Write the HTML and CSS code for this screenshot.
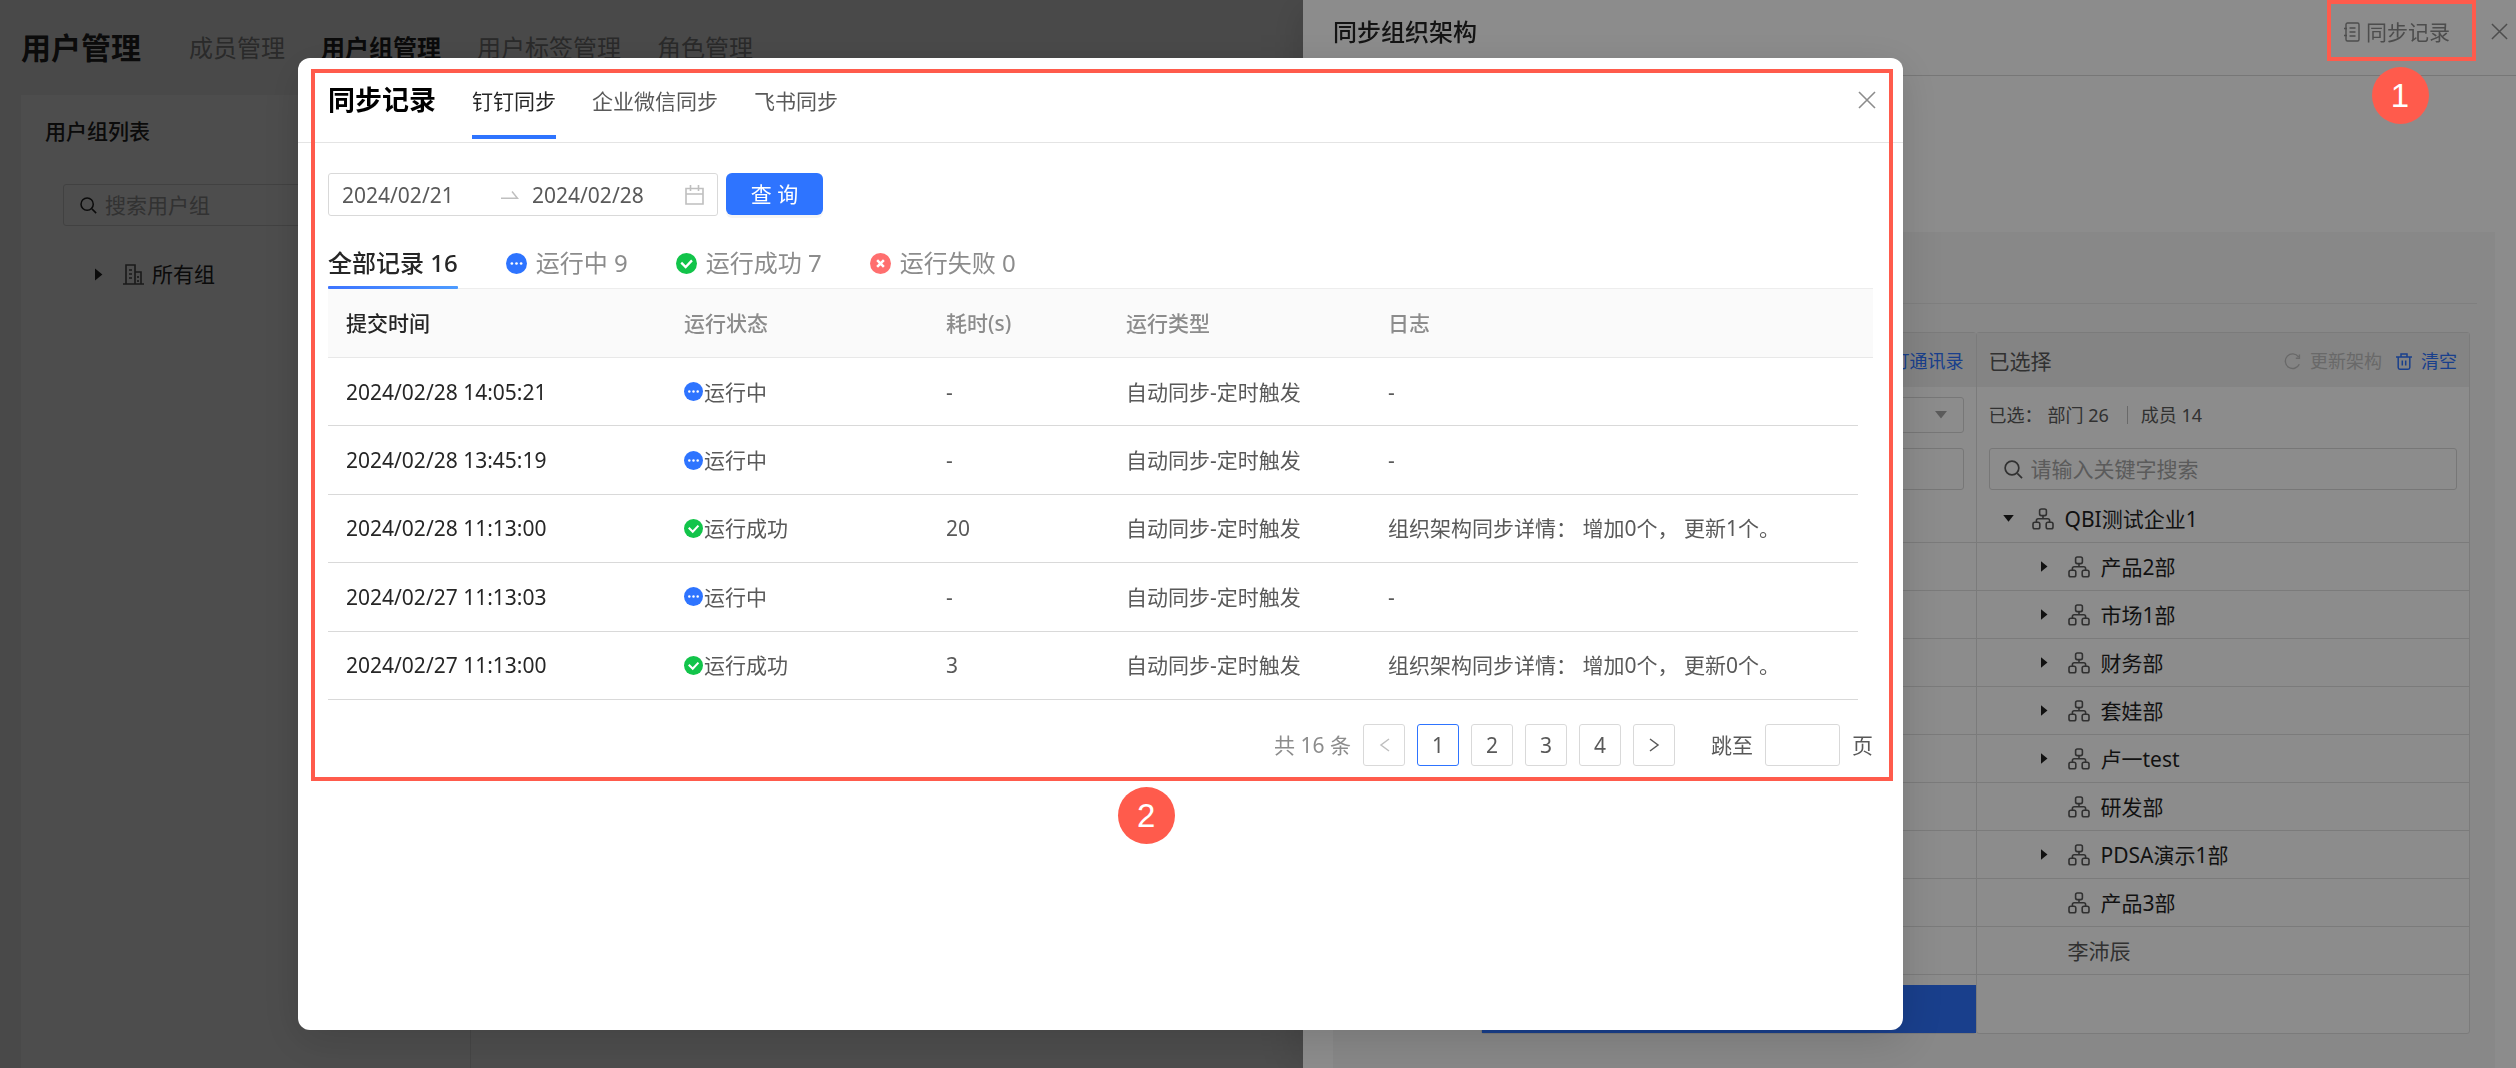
FILE: index.html
```html
<!DOCTYPE html>
<html lang="zh-CN">
<head>
    <meta charset="UTF-8">
    <meta name="viewport" content="width=device-width, initial-scale=1.0">
    <title>用户管理</title>
    <link rel="stylesheet" href="styles.css">
</head>
<body>
    <!-- shared icons -->
    <svg class="sprite" aria-hidden="true">
        <symbol id="i-org" viewBox="0 0 22 22">
            <g fill="none" stroke="currentColor" stroke-width="1.6">
                <rect x="7.6" y="1" width="6.8" height="6.6" rx="1.8"/>
                <rect x="1" y="14.2" width="6.8" height="6.6" rx="1.8"/>
                <rect x="14.2" y="14.2" width="6.8" height="6.6" rx="1.8"/>
                <path d="M11 7.6v3.2M4.4 14.2v-1.6q0-1.8 1.8-1.8h9.6q1.8 0 1.8 1.8v1.6"/>
            </g>
        </symbol>
        <symbol id="i-right" viewBox="0 0 8 12"><path d="M0 0l7.4 6L0 12z" fill="currentColor"/></symbol>
        <symbol id="i-down" viewBox="0 0 12 8"><path d="M0 0h12L6 7.6z" fill="currentColor"/></symbol>
        <symbol id="i-close" viewBox="0 0 18 18"><path d="M1 1l16 16M17 1L1 17" fill="none" stroke="currentColor" stroke-width="1.6"/></symbol>
        <symbol id="i-search" viewBox="0 0 20 20"><path d="M14 14l5 5" fill="none" stroke="currentColor" stroke-width="1.8"/><circle cx="8.4" cy="8.4" r="7.2" fill="none" stroke="currentColor" stroke-width="1.8"/></symbol>
        <symbol id="i-running" viewBox="0 0 20 20"><circle cx="10" cy="10" r="10" fill="#2e74ff"/><circle cx="5.6" cy="10" r="1.3" fill="#fff"/><circle cx="10" cy="10" r="1.3" fill="#fff"/><circle cx="14.4" cy="10" r="1.3" fill="#fff"/></symbol>
        <symbol id="i-success" viewBox="0 0 20 20"><circle cx="10" cy="10" r="10" fill="#12c44a"/><path d="M5 9.2l4.2 4.2 6-6.4" fill="none" stroke="#fff" stroke-width="2.2"/></symbol>
        <symbol id="i-fail" viewBox="0 0 20 20"><circle cx="10" cy="10" r="10" fill="#ff6f6f"/><path d="M6.8 6.8l6.4 6.4M13.2 6.8l-6.4 6.4" fill="none" stroke="#fff" stroke-width="2.4"/></symbol>
    </svg>

    <main class="page">
        <header class="page-header">
            <h1>用户管理</h1>
            <nav class="page-nav">
                <a href="#">成员管理</a>
                <a href="#" class="active">用户组管理</a>
                <a href="#">用户标签管理</a>
                <a href="#">角色管理</a>
            </nav>
        </header>
        <div class="page-panel">
            <aside class="group-list">
                <h2>用户组列表</h2>
                <div class="search-box group-search">
                    <svg width="17" height="17"><use href="#i-search"/></svg>
                    <input type="text" placeholder="搜索用户组" aria-label="搜索用户组">
                </div>
                <div class="group-root">
                    <svg class="caret" width="8" height="13"><use href="#i-right"/></svg>
                    <svg width="21" height="21" viewBox="0 0 21 21" fill="none" stroke="#555" stroke-width="1.6">
                        <path d="M0 20h21M3 20V1h9v19M12 8h6v12M6 6h3M6 10h3M6 14h3M15 12v2M15 16v2"/>
                    </svg>
                    <span>所有组</span>
                </div>
            </aside>
        </div>
    </main>

    <div class="mask"></div>

    <aside class="drawer">
        <header class="drawer-header">
            <h2>同步组织架构</h2>
            <button class="link-btn" type="button">
                <svg width="17" height="20" viewBox="0 0 17 20" fill="none" stroke="currentColor" stroke-width="1.4">
                    <rect x="3" y="1" width="13" height="18" rx="1.5"/>
                    <path d="M6.500 6h6M6.500 10h6M6.500 14h6M1 6.500h3M1 13.500h3"/>
                </svg>
                同步记录
            </button>
            <button class="icon-btn" type="button" aria-label="关闭"><svg width="17" height="17"><use href="#i-close"/></svg></button>
        </header>
        <div class="drawer-body">
            <div class="block-title"></div>
            <div class="transfer">
                <section class="col">
                    <div class="col-header end"><a href="#">钉钉通讯录</a></div>
                    <div class="col-select">
                        <button class="fake-select" type="button" aria-label="选择范围"><svg width="12" height="8"><use href="#i-down"/></svg></button>
                    </div>
                    <div class="search-box"><input type="text" aria-label="搜索"></div>
                    <ul class="tree">
                        <li></li><li></li><li></li><li></li><li></li>
                        <li></li><li></li><li></li><li></li><li></li>
                    </ul>
                    <button class="add-btn" type="button" aria-label="添加"></button>
                </section>
                <section class="col">
                    <div class="col-header">
                        <h3>已选择</h3>
                        <button class="col-action disabled" type="button">
                            <svg width="17" height="17" viewBox="0 0 17 17" fill="none" stroke="currentColor" stroke-width="1.4"><path d="M14.500 3.800A7.300 7.300 0 1 0 15.300 11.200M15.400 1.600v3.600h-3.600"/></svg>
                            更新架构
                        </button>
                        <button class="col-action" type="button">
                            <svg width="16" height="17" viewBox="0 0 16 17" fill="none" stroke="currentColor" stroke-width="1.5"><path d="M0 4h16M5 4V1h6v3M2.200 4v10.500q0 1.700 1.700 1.700h8.200q1.700 0 1.700-1.700V4M6.300 7.500v5M9.700 7.500v5"/></svg>
                            清空
                        </button>
                    </div>
                    <div class="col-count">
                        <span>已选：</span>
                        <span>部门 26</span>
                        <i></i>
                        <span>成员 14</span>
                    </div>
                    <div class="search-box">
                        <svg width="19" height="19"><use href="#i-search"/></svg>
                        <input type="text" placeholder="请输入关键字搜索" aria-label="请输入关键字搜索">
                    </div>
                    <ul class="tree">
                        <li class="root"><span class="arrow"><svg width="11" height="7"><use href="#i-down"/></svg></span><svg class="org"><use href="#i-org"/></svg>QBI测试企业1</li>
                        <li><span class="arrow"><svg width="7" height="11"><use href="#i-right"/></svg></span><svg class="org"><use href="#i-org"/></svg>产品2部</li>
                        <li><span class="arrow"><svg width="7" height="11"><use href="#i-right"/></svg></span><svg class="org"><use href="#i-org"/></svg>市场1部</li>
                        <li><span class="arrow"><svg width="7" height="11"><use href="#i-right"/></svg></span><svg class="org"><use href="#i-org"/></svg>财务部</li>
                        <li><span class="arrow"><svg width="7" height="11"><use href="#i-right"/></svg></span><svg class="org"><use href="#i-org"/></svg>套娃部</li>
                        <li><span class="arrow"><svg width="7" height="11"><use href="#i-right"/></svg></span><svg class="org"><use href="#i-org"/></svg>卢一test</li>
                        <li><span class="arrow"></span><svg class="org"><use href="#i-org"/></svg>研发部</li>
                        <li><span class="arrow"><svg width="7" height="11"><use href="#i-right"/></svg></span><svg class="org"><use href="#i-org"/></svg>PDSA演示1部</li>
                        <li><span class="arrow"></span><svg class="org"><use href="#i-org"/></svg>产品3部</li>
                        <li class="member"><span class="arrow"></span>李沛辰</li>
                    </ul>
                </section>
            </div>
        </div>
    </aside>

    <div class="modal-wrap">
        <div class="modal" role="dialog" aria-label="同步记录">
            <div class="records">
                <header class="modal-header">
                    <h2>同步记录</h2>
                    <nav class="modal-tabs">
                        <a href="#" class="active">钉钉同步</a>
                        <a href="#">企业微信同步</a>
                        <a href="#">飞书同步</a>
                    </nav>
                    <button class="icon-btn" type="button" aria-label="关闭"><svg width="18" height="18"><use href="#i-close"/></svg></button>
                </header>
                <div class="modal-body">
                    <form class="filter">
                        <div class="range">
                            <input type="text" value="2024/02/21" aria-label="开始日期">
                            <svg width="18" height="10" viewBox="0 0 18 10" fill="none" stroke="#bfbfbf" stroke-width="1.5"><path d="M0 8.300h16.500L11 1.500"/></svg>
                            <input class="range-end" type="text" value="2024/02/28" aria-label="结束日期">
                            <svg width="19" height="20" viewBox="0 0 19 20" fill="none" stroke="#bfbfbf" stroke-width="1.600"><path d="M1 3.500h17V19H1zM1 9h17M5.500 0v6M13.500 0v6"/></svg>
                        </div>
                        <button class="query-btn" type="button">查 询</button>
                    </form>
                    <div class="status-tabs">
                        <button class="active" type="button">全部记录 16</button>
                        <button type="button"><svg width="21" height="21"><use href="#i-running"/></svg>运行中 9</button>
                        <button type="button"><svg width="21" height="21"><use href="#i-success"/></svg>运行成功 7</button>
                        <button type="button"><svg width="21" height="21"><use href="#i-fail"/></svg>运行失败 0</button>
                    </div>
                    <table class="log-table">
                        <colgroup>
                            <col class="c-time"><col class="c-status"><col class="c-cost"><col class="c-type"><col><col class="c-bar">
                        </colgroup>
                        <thead>
                            <tr><th class="sorted">提交时间</th><th>运行状态</th><th>耗时(s)</th><th>运行类型</th><th>日志</th><th class="bar"></th></tr>
                        </thead>
                        <tbody>
                            <tr><td>2024/02/28 14:05:21</td><td><span class="state"><svg width="19" height="19"><use href="#i-running"/></svg>运行中</span></td><td>-</td><td>自动同步-定时触发</td><td>-</td></tr>
                            <tr><td>2024/02/28 13:45:19</td><td><span class="state"><svg width="19" height="19"><use href="#i-running"/></svg>运行中</span></td><td>-</td><td>自动同步-定时触发</td><td>-</td></tr>
                            <tr><td>2024/02/28 11:13:00</td><td><span class="state"><svg width="19" height="19"><use href="#i-success"/></svg>运行成功</span></td><td>20</td><td>自动同步-定时触发</td><td>组织架构同步详情： 增加0个， 更新1个。</td></tr>
                            <tr><td>2024/02/27 11:13:03</td><td><span class="state"><svg width="19" height="19"><use href="#i-running"/></svg>运行中</span></td><td>-</td><td>自动同步-定时触发</td><td>-</td></tr>
                            <tr><td>2024/02/27 11:13:00</td><td><span class="state"><svg width="19" height="19"><use href="#i-success"/></svg>运行成功</span></td><td>3</td><td>自动同步-定时触发</td><td>组织架构同步详情： 增加0个， 更新0个。</td></tr>
                        </tbody>
                    </table>
                    <div class="pagination">
                        <span class="total">共 16 条</span>
                        <button class="prev" type="button" aria-label="上一页"><svg width="11" height="14" viewBox="0 0 11 14"><path d="M10 1L2 7l8 6" fill="none" stroke="currentColor" stroke-width="1.5"/></svg></button>
                        <button class="current" type="button">1</button>
                        <button type="button">2</button>
                        <button type="button">3</button>
                        <button type="button">4</button>
                        <button type="button" aria-label="下一页"><svg width="11" height="14" viewBox="0 0 11 14"><path d="M1 1l8 6-8 6" fill="none" stroke="currentColor" stroke-width="1.5"/></svg></button>
                        <label class="jump">跳至<input type="text">页</label>
                    </div>
                </div>
                <div class="mark mark-records"><span class="badge">2</span></div>
            </div>
        </div>
    </div>

    <div class="mark mark-entry"><span class="badge">1</span></div>
</body>
</html>
```
FILE: styles.css
```css
* {
    box-sizing: border-box;
}
body {
    margin: 0;
    font-family: "Noto Sans", "Noto Sans CJK SC", sans-serif;
    font-size: 21px;
    line-height: 30px;
    color: #262626;
    background: #f5f5f5;
}
h1, h2, h3, ul {
    margin: 0;
    padding: 0;
}
ul {
    list-style: none;
}
a {
    color: inherit;
    text-decoration: none;
}
button, input {
    font: inherit;
    color: inherit;
    margin: 0;
    padding: 0;
    border: none;
    background: none;
}
button {
    cursor: pointer;
}
input {
    min-width: 0;
    outline: none;
}
input::placeholder {
    color: #a6a6a6;
}
svg {
    display: block;
    flex: none;
}
.sprite {
    position: absolute;
    width: 0;
    height: 0;
}

/* page behind */
.page {
    display: flex;
    flex-direction: column;
    min-height: 100vh;
    padding-left: 21px;
}
.page-header {
    display: flex;
    align-items: center;
    gap: 48px;
    height: 95px;
}
.page-header h1 {
    font-size: 30px;
    font-weight: 700;
}
.page-nav {
    display: flex;
    gap: 36px;
    font-size: 24px;
    color: #8c8c8c;
}
.page-nav .active {
    color: #262626;
    font-weight: 700;
}
.page-panel {
    flex: 1;
    display: flex;
    background: #fff;
}
.group-list {
    width: 450px;
    padding: 21px 24px;
    border-right: 1px solid #e8e8e8;
}
.group-list h2 {
    font-size: 21px;
    font-weight: 500;
}
.search-box {
    display: flex;
    align-items: center;
    gap: 8px;
    height: 42px;
    padding: 0 14px;
    border: 1px solid #d9d9d9;
    border-radius: 3px;
}
.search-box input {
    flex: 1;
}
.group-search {
    margin: 38px 0 0 18px;
    padding: 0 16px;
}
.group-root {
    display: flex;
    align-items: center;
    gap: 8px;
    margin: 33px 0 0 50px;
}
.group-root .caret {
    margin-right: 12px;
}

.mask {
    position: fixed;
    inset: 0;
    background: rgba(0, 0, 0, 0.45);
}

/* drawer */
.drawer {
    position: fixed;
    top: 0;
    right: 0;
    bottom: 0;
    width: 1213px;
    max-width: 100%;
    display: flex;
    flex-direction: column;
    overflow: hidden;
    background: #fff;
    box-shadow: -9px 0 42px rgba(0, 0, 0, 0.12);
}
.drawer-header {
    display: flex;
    align-items: center;
    height: 76px;
    padding: 0 8px 12px 30px;
    border-bottom: 1px solid #d9d9d9;
}
.drawer-header h2 {
    flex: 1;
    font-size: 24px;
    font-weight: 500;
}
.link-btn {
    display: flex;
    align-items: center;
    gap: 6px;
    margin-right: 41px;
    color: #8c8c8c;
}
.icon-btn {
    color: #8c8c8c;
}
.drawer-body {
    flex: 1;
    margin: 156px 21px 0 30px;
    padding: 0 25px 0 148px;
    background: #f7f7f7;
}
.block-title {
    height: 72px;
    margin: 0 -7px 28px -130px;
    border-bottom: 1px solid #e8e8e8;
}
.transfer {
    display: grid;
    grid-template-columns: 1fr 1fr;
}
.col {
    display: flex;
    flex-direction: column;
    height: 702px;
    border: 1px solid #e0e0e0;
    border-radius: 3px;
    background: #fff;
}
.col:first-child {
    border-right: none;
}
.col-header {
    display: flex;
    align-items: center;
    height: 54px;
    padding: 2px 12px 0;
    background: #f0f0f0;
}
.col-header h3 {
    flex: 1;
    font-size: 21px;
    font-weight: 400;
    color: #595959;
}
.col-header.end {
    justify-content: flex-end;
    font-size: 18px;
    color: #2e74ff;
}
.col-action {
    display: flex;
    align-items: center;
    gap: 9px;
    margin-left: 14px;
    font-size: 18px;
    color: #2e74ff;
}
.col-action.disabled {
    color: #bfbfbf;
}
.col-count, .col-select {
    display: flex;
    align-items: center;
    height: 61px;
    padding: 0 12px 5px;
    font-size: 18px;
    color: #595959;
}
.col-count i {
    width: 1px;
    height: 18px;
    margin: 0 13px 0 18px;
    background: #bfbfbf;
}
.col-count span:first-child {
    margin-right: 5px;
}
.fake-select {
    display: flex;
    align-items: center;
    justify-content: flex-end;
    width: 100%;
    height: 36px;
    padding-right: 16px;
    border: 1px solid #d9d9d9;
    border-radius: 3px;
    color: #a6a6a6;
}
.col .search-box {
    margin: 0 12px 5px;
    color: #595959;
}
.tree li {
    display: flex;
    align-items: center;
    height: 48px;
    padding-left: 51px;
    border-bottom: 1px solid #e0e0e0;
    color: #1f1f1f;
}
.tree .root {
    padding-left: 15px;
}
.tree .arrow {
    display: flex;
    justify-content: center;
    width: 40px;
    padding-right: 7px;
}
.tree .org {
    width: 22px;
    height: 22px;
    margin-right: 11px;
    color: #595959;
}
.tree .member {
    color: #595959;
}
.add-btn {
    flex: 1;
    margin-top: 10px;
    background: #2e74ff;
}

/* modal */
.modal-wrap {
    position: fixed;
    inset: 0;
    display: flex;
    padding: 58px 613px 38px 298px;
    background: rgba(0, 0, 0, 0.45);
}
.modal {
    flex: 1;
    min-width: 0;
    background: #fff;
    border-radius: 12px;
    box-shadow: 0 9px 42px rgba(0, 0, 0, 0.14);
}
.records {
    position: relative;
    padding-bottom: 15px;
}
.modal-header {
    display: flex;
    align-items: center;
    height: 85px;
    padding: 0 27px 0 30px;
    border-bottom: 1px solid #e4e4e4;
}
.modal-header h2 {
    margin-right: 36px;
    font-size: 27px;
    font-weight: 700;
    color: #000;
}
.modal-tabs {
    flex: 1;
    align-self: flex-start;
    display: flex;
    gap: 36px;
    padding-top: 9px;
    color: #595959;
    line-height: 68px;
}
.modal-tabs a {
    border-bottom: 4px solid transparent;
}
.modal-tabs .active {
    color: #262626;
    border-color: #2e74ff;
}
.modal-body {
    padding: 30px 30px 0;
}
.filter {
    display: flex;
    gap: 8px;
}
.range {
    display: flex;
    align-items: center;
    gap: 13px;
    width: 390px;
    height: 43px;
    padding: 0 13px;
    border: 1px solid #d9d9d9;
    border-radius: 3px;
    color: #595959;
}
.range input {
    flex: none;
    width: 146px;
}
.range .range-end {
    flex: 1;
}
.query-btn {
    width: 97px;
    height: 42px;
    border-radius: 6px;
    color: #fff;
    background: #2e74ff;
    box-shadow: 0 3px 0 rgba(0, 0, 0, 0.04);
}
.status-tabs {
    display: flex;
    gap: 48px;
    margin: 21px 0 -1px;
}
.status-tabs button {
    position: relative;
    display: flex;
    align-items: center;
    gap: 9px;
    height: 52px;
    font-size: 24px;
    color: #8c8c8c;
}
.status-tabs .active {
    color: #262626;
    font-weight: 500;
}
.status-tabs .active::after {
    content: "";
    position: absolute;
    left: 0;
    right: 0;
    bottom: 0;
    height: 3px;
    border-radius: 1px;
    background: linear-gradient(90deg, #3d74ff, #4d9bff);
}
.log-table {
    width: 100%;
    height: 412px;
    table-layout: fixed;
    border-spacing: 0;
    color: #595959;
}
.c-time {
    width: 338px;
}
.c-status, .c-type {
    width: 262px;
}
.c-cost {
    width: 180px;
}
.c-bar {
    width: 15px;
}
.log-table th {
    height: 70px;
    padding: 0 0 0 18px;
    text-align: left;
    font-weight: 500;
    color: #8c8c8c;
    background: #fafafa;
    border-top: 1px solid #ededed;
    border-bottom: 1px solid #e8e8e8;
}
.log-table .sorted {
    color: #262626;
}
.log-table .bar {
    padding: 0;
}
.log-table td {
    padding: 0 0 0 18px;
    border-bottom: 1px solid #d9d9d9;
    white-space: nowrap;
}
.log-table td:first-child {
    color: #262626;
}
.state {
    display: flex;
    align-items: center;
    gap: 1px;
}
.pagination {
    display: flex;
    align-items: center;
    justify-content: flex-end;
    gap: 12px;
    margin-top: 24px;
    color: #595959;
}
.pagination .total {
    color: #8c8c8c;
}
.pagination button {
    display: flex;
    align-items: center;
    justify-content: center;
    width: 42px;
    height: 42px;
    border: 1px solid #d9d9d9;
    border-radius: 3px;
}
.pagination .prev {
    color: #bfbfbf;
}
.pagination .current {
    border-color: #2e74ff;
}
.jump {
    display: flex;
    align-items: center;
    gap: 12px;
    margin-left: 24px;
}
.jump input {
    width: 75px;
    height: 42px;
    border: 1px solid #d9d9d9;
    border-radius: 3px;
}

/* callouts */
.mark {
    position: absolute;
    border: 4px solid #ff5b4c;
    pointer-events: none;
}
.mark-records {
    inset: 11px 10px 0 13px;
}
.mark-entry {
    position: fixed;
    top: 0;
    right: 40px;
    width: 149px;
    height: 61px;
}
.badge {
    position: absolute;
    top: calc(100% + 10px);
    left: 51%;
    width: 57px;
    height: 57px;
    border-radius: 50%;
    background: #ff5b4c;
    color: #fff;
    font: 33px/57px "Liberation Sans", sans-serif;
    text-align: center;
}
.mark-entry .badge {
    left: calc(50% - 30px);
}
```
